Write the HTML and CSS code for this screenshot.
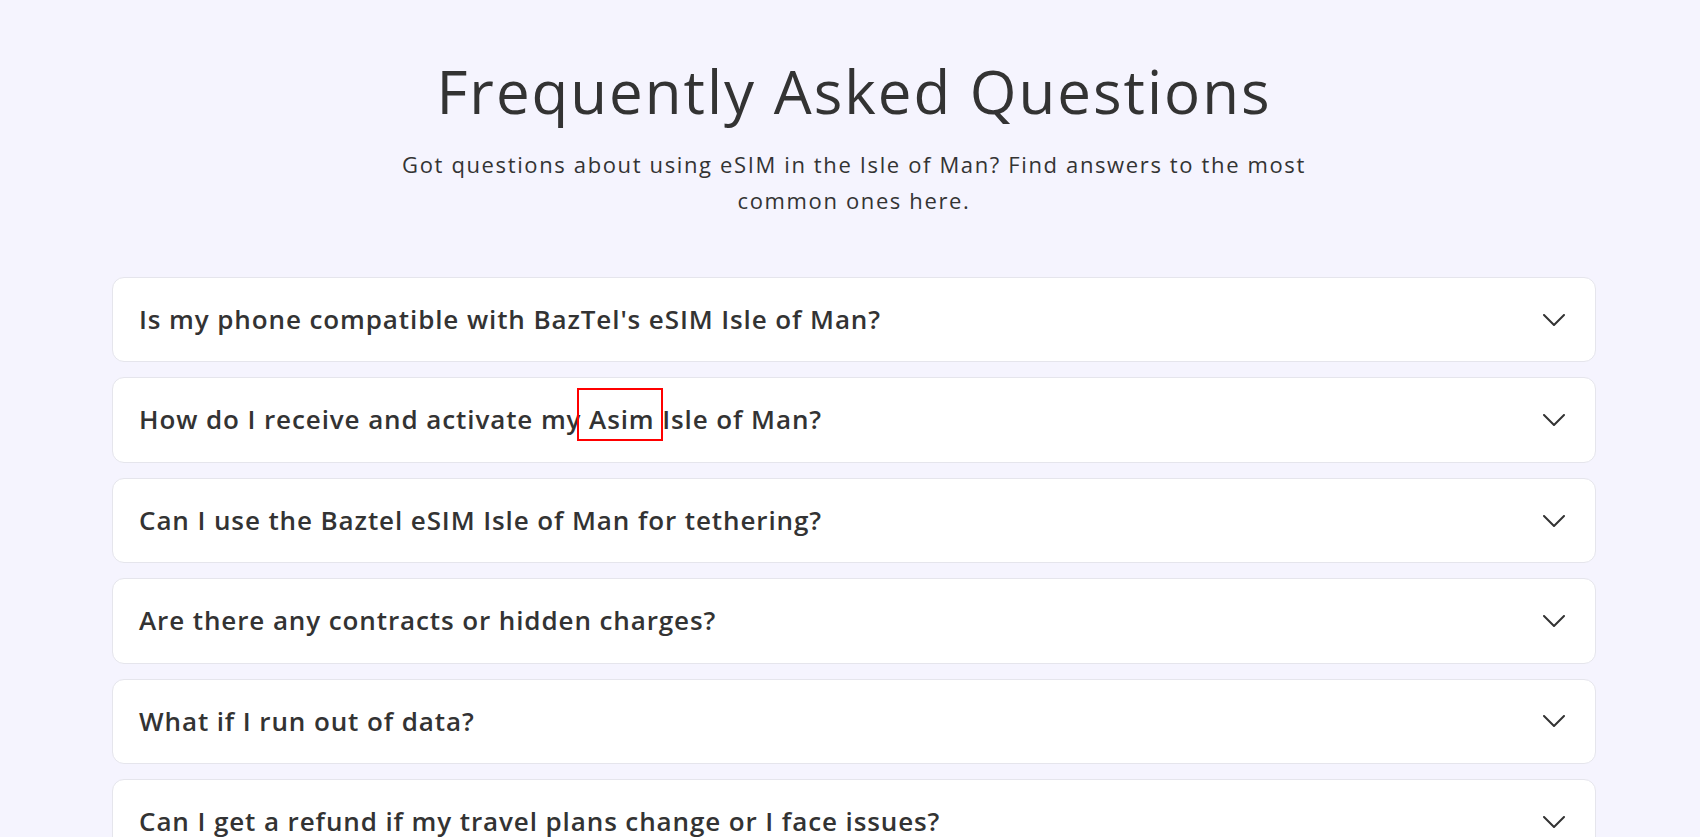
FILE: index.html
```html
<!DOCTYPE html>
<html lang="en">
<head>
<meta charset="utf-8">
<title>FAQ</title>
<link rel="stylesheet" href="styles.css">
</head>
<body>
<main class="faq">
  <header class="faq-head">
    <h1 class="faq-title">Frequently Asked Questions</h1>
    <p class="faq-sub">Got questions about using eSIM in the Isle of Man? Find answers to the most common ones here.</p>
  </header>
  <div class="faq-list">
    <div class="faq-item"><span class="q">Is my phone compatible with BazTel's eSIM Isle of Man?</span><svg class="chev" viewBox="0 0 22 12" width="22" height="12"><polyline points="1,1 11,11 21,1"/></svg></div>
    <div class="faq-item"><span class="q">How do I receive and activate my <span class="flag">Asim</span> Isle of Man?</span><svg class="chev" viewBox="0 0 22 12" width="22" height="12"><polyline points="1,1 11,11 21,1"/></svg></div>
    <div class="faq-item"><span class="q">Can I use the Baztel eSIM Isle of Man for tethering?</span><svg class="chev" viewBox="0 0 22 12" width="22" height="12"><polyline points="1,1 11,11 21,1"/></svg></div>
    <div class="faq-item"><span class="q">Are there any contracts or hidden charges?</span><svg class="chev" viewBox="0 0 22 12" width="22" height="12"><polyline points="1,1 11,11 21,1"/></svg></div>
    <div class="faq-item"><span class="q">What if I run out of data?</span><svg class="chev" viewBox="0 0 22 12" width="22" height="12"><polyline points="1,1 11,11 21,1"/></svg></div>
    <div class="faq-item"><span class="q">Can I get a refund if my travel plans change or I face issues?</span><svg class="chev" viewBox="0 0 22 12" width="22" height="12"><polyline points="1,1 11,11 21,1"/></svg></div>
  </div>
</main>
</body>
</html>
```

FILE: styles.css
```css
html, body {
  margin: 0;
  padding: 0;
  background: #f5f4fe;
}
body {
  font-family: "Open Sans", "Noto Sans", sans-serif;
  color: #333333;
  overflow: hidden;
}
.faq {
  padding: 55px 104px 40px 112px;
}
.faq-head {
  display: flex;
  flex-direction: column;
  align-items: center;
  text-align: center;
}
.faq-title {
  margin: 0;
  font-size: 60px;
  line-height: 72px;
  font-weight: 400;
  letter-spacing: 2px;
  color: #333333;
}
.faq-sub {
  margin: 19px 0 0;
  max-width: 950px;
  font-size: 22px;
  line-height: 36px;
  letter-spacing: 1.63px;
  color: #333333;
}
.faq-list {
  margin-top: 59px;
  display: flex;
  flex-direction: column;
  gap: 15px;
}
.faq-item {
  display: flex;
  align-items: center;
  justify-content: space-between;
  background: #ffffff;
  border: 1px solid #e5e5ec;
  border-radius: 12px;
  padding: 22px 30px 22px 26px;
}
.q {
  font-size: 26px;
  line-height: 39.4px;
  font-weight: 600;
  letter-spacing: 0.9px;
  color: #333333;
}
.flag {
  position: relative;
}
.flag::after {
  content: "";
  position: absolute;
  left: -12px;
  right: -8px;
  top: -13px;
  bottom: -4px;
  border: 2px solid #ff0000;
}
.chev {
  flex: none;
  fill: none;
  stroke: #333333;
  stroke-width: 2;
  stroke-linecap: round;
  stroke-linejoin: round;
}
```
